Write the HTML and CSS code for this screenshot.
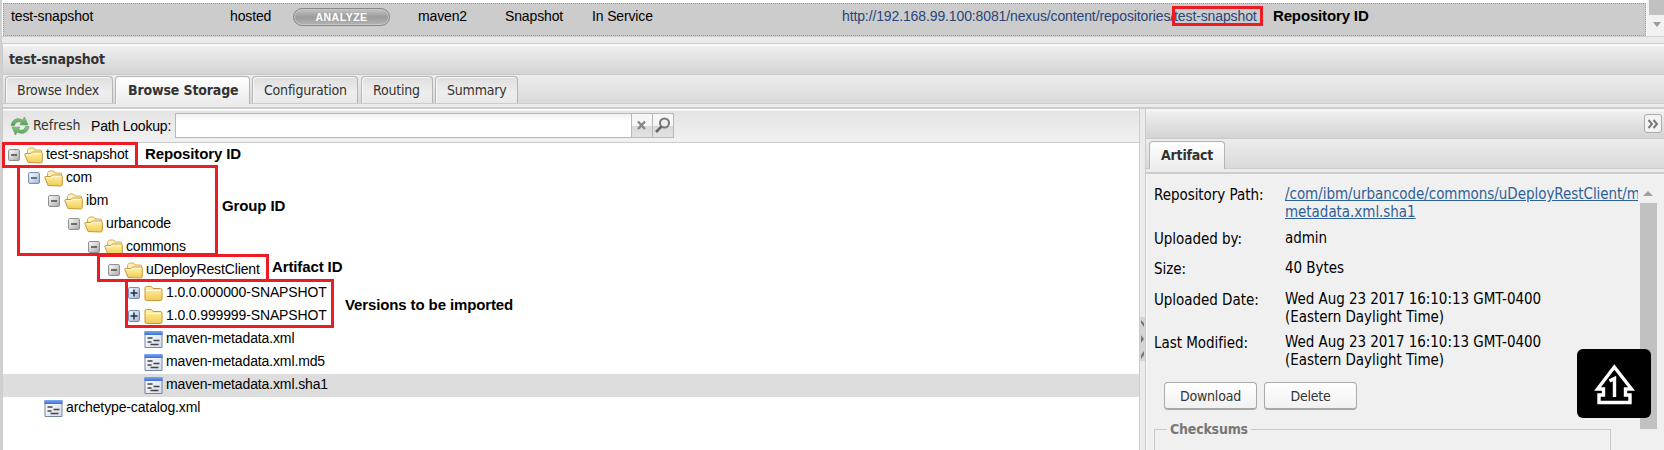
FILE: index.html
```html
<!DOCTYPE html>
<html lang="en">
<head>
<meta charset="utf-8">
<title>Nexus - test-snapshot</title>
<link rel="stylesheet" href="styles.css">
</head>
<body>
<svg width="0" height="0" class="defs">
  <defs>
    <linearGradient id="gold" x1="0" y1="0" x2="0" y2="1"><stop offset="0" stop-color="#fff3a8"/><stop offset="1" stop-color="#f0cb55"/></linearGradient>
    <linearGradient id="blue" x1="0" y1="0" x2="0" y2="1"><stop offset="0" stop-color="#7fa6f0"/><stop offset="1" stop-color="#3b6fd8"/></linearGradient>
    <linearGradient id="page" x1="0" y1="0" x2="1" y2="1"><stop offset="0" stop-color="#fff"/><stop offset="1" stop-color="#d3dcea"/></linearGradient>
    <linearGradient id="box" x1="0" y1="0" x2="1" y2="1"><stop offset="0" stop-color="#fff"/><stop offset="1" stop-color="#aaa"/></linearGradient>
    <linearGradient id="boxb" x1="0" y1="0" x2="1" y2="1"><stop offset="0" stop-color="#fff"/><stop offset="1" stop-color="#a3b8d6"/></linearGradient>
    <linearGradient id="green" x1="0" y1="0" x2="0" y2="1"><stop offset="0" stop-color="#8ec58a"/><stop offset="1" stop-color="#4f9f50"/></linearGradient>
    <symbol id="open" viewBox="0 0 19 17"><path d="M3.500 14V3.500q0-1 1-1.500l1-1h4l1.500 2h5.500q1 0 1 1v3" fill="#fdf0bd" stroke="#d9a94a"/><path d="M4 15.500 .8 7.500q-.2-1 1-1h5l1.500-1.500h8.500q1.500 0 1.500 1.200v8q-.1 1.800-1.500 1.800z" fill="url(#gold)" stroke="#c9983a"/><path d="M2.500 7.800h5l1.500-1.500h8" fill="none" stroke="#fffbe0"/></symbol>
    <symbol id="closed" viewBox="0 0 19 17"><path d="M1 14V3q0-1.500 1.500-1.500h5l1.500 2h7.500q1.500 0 1.500 1.500v9q0 1.500-1.500 1.500h-14q-1.500 0-1.500-1.500z" fill="url(#gold)" stroke="#c9983a"/><path d="M2 5.500h15" stroke="#fffbe0"/></symbol>
    <symbol id="file" viewBox="0 0 18 17"><path d="M.5.500h17v16H.5z" fill="url(#page)" stroke="#7485a5"/><path d="M0 0h18v4H0z" fill="url(#blue)"/><path d="M3 7h5M9 9.500h6M3 11h4M6 13.500h8" stroke="#444" stroke-width="1.300"/></symbol>
    <symbol id="minus" viewBox="0 0 12 12"><rect x=".6" y=".6" width="10.800" height="10.800" rx="1" fill="url(#box)" stroke="#888"/><path d="M3 6h6" stroke="#333" stroke-width="1.300"/></symbol>
    <symbol id="minusb" viewBox="0 0 12 12"><rect x=".6" y=".6" width="10.800" height="10.800" rx="1" fill="url(#boxb)" stroke="#6d84a8"/><path d="M3 6h6" stroke="#223c66" stroke-width="1.300"/></symbol>
    <symbol id="plus" viewBox="0 0 12 12"><rect x=".6" y=".6" width="10.800" height="10.800" rx="1" fill="url(#boxb)" stroke="#6d84a8"/><path d="M2.500 6h7M6 2.500v7" stroke="#222f4a" stroke-width="1.500"/></symbol>
  </defs>
</svg>
<div class="app">
  <div class="grid">
    <div class="grid-row">
      <span class="c-name">test-snapshot</span><span class="c-type">hosted</span><span class="analyze">ANALYZE</span><span class="c-format">maven2</span><span class="c-policy">Snapshot</span><span class="c-status">In Service</span><a class="c-url">http://192.168.99.100:8081/nexus/content/repositories/test-snapshot</a>
    </div>
    <div class="grid-scroll"><i></i><b></b></div>
  </div>
  <div class="detail">
    <div class="title t">test-snapshot</div>
    <div class="tabs t">
      <div class="tab w1">Browse Index</div><div class="tab on w2">Browse Storage</div><div class="tab w3">Configuration</div><div class="tab w4">Routing</div><div class="tab w5">Summary</div>
    </div>
    <div class="strip"></div>
    <div class="main">
      <div class="left">
        <div class="toolbar">
          <svg class="refresh" width="20" height="20" viewBox="0 0 20 20"><path d="M1 9.500C2 4 6 1.500 11 3.200l1.800.8L14.500 1 18 9l-8-.2 1.500-2.300C8 5 5.500 6 4.500 9.500z" fill="url(#green)" stroke="#5c9c5a" stroke-width=".6"/><path d="M19 10.500c-1 5.500-5 8-10 6.300L7.200 16 5.500 19 2 11l8 .2-1.500 2.300c3.500 1.500 6 .5 7-3z" fill="url(#green)" stroke="#5c9c5a" stroke-width=".6"/></svg>
          <span class="t refresh-label">Refresh</span><span class="lookup">Path Lookup:</span>
          <div class="field"></div>
          <div class="trig"><svg width="20" height="23" viewBox="0 0 20 23"><path d="m6 7.500 7 7.500m0-7.500L6 15" stroke="#858585" stroke-width="2.300"/></svg></div>
          <div class="trig"><svg width="20" height="23" viewBox="0 0 20 23"><circle cx="11.500" cy="9" r="4.500" fill="#eee" stroke="#777" stroke-width="2"/><path d="m8.500 12.500-5.500 5.500" stroke="#666" stroke-width="2.500"/></svg></div>
        </div>
        <div class="tree">
          <div class="row"><svg class="ex"><use href="#minus"/></svg><svg class="ic"><use href="#open"/></svg><span>test-snapshot</span></div>
          <div class="row l1"><svg class="ex"><use href="#minusb"/></svg><svg class="ic"><use href="#open"/></svg><span>com</span></div>
          <div class="row l2"><svg class="ex"><use href="#minus"/></svg><svg class="ic"><use href="#open"/></svg><span>ibm</span></div>
          <div class="row l3"><svg class="ex"><use href="#minus"/></svg><svg class="ic"><use href="#open"/></svg><span>urbancode</span></div>
          <div class="row l4"><svg class="ex"><use href="#minus"/></svg><svg class="ic"><use href="#open"/></svg><span>commons</span></div>
          <div class="row l5"><svg class="ex"><use href="#minus"/></svg><svg class="ic"><use href="#open"/></svg><span>uDeployRestClient</span></div>
          <div class="row l6"><svg class="ex"><use href="#plus"/></svg><svg class="ic"><use href="#closed"/></svg><span>1.0.0.000000-SNAPSHOT</span></div>
          <div class="row l6"><svg class="ex"><use href="#plus"/></svg><svg class="ic"><use href="#closed"/></svg><span>1.0.0.999999-SNAPSHOT</span></div>
          <div class="row l6"><i class="ex"></i><svg class="ic"><use href="#file"/></svg><span>maven-metadata.xml</span></div>
          <div class="row l6"><i class="ex"></i><svg class="ic"><use href="#file"/></svg><span>maven-metadata.xml.md5</span></div>
          <div class="row l6 sel"><i class="ex"></i><svg class="ic"><use href="#file"/></svg><span>maven-metadata.xml.sha1</span></div>
          <div class="row l1"><i class="ex"></i><svg class="ic"><use href="#file"/></svg><span>archetype-catalog.xml</span></div>
        </div>
      </div>
      <div class="split"><svg width="5" height="44" viewBox="0 0 5 44"><path d="M0 0h5v44H0z" fill="#d4d4d4"/><path d="m1 3 3 3v4L1 6zM1 18l3 4-3 4zM1 42l3-4v-4l-3 4z" fill="#777"/></svg></div>
      <div class="right t">
        <div class="rhead"><div class="collapse"><svg width="16" height="16" viewBox="0 0 16 16"><path d="m3.500 4 3.500 4-3.500 4m5-8 3.500 4-3.500 4" fill="none" stroke="#777" stroke-width="1.900"/></svg></div></div>
        <div class="rtabs"><div class="tab on">Artifact</div></div>
        <div class="rstrip"></div>
        <div class="rbody">
          <div class="info">
            <div class="f f1"><label>Repository Path:</label><a>/com/ibm/urbancode/commons/uDeployRestClient/maven-<br>metadata.xml.sha1</a></div>
            <div class="f f2"><label>Uploaded by:</label><p>admin</p></div>
            <div class="f f3"><label>Size:</label><p>40 Bytes</p></div>
            <div class="f f4"><label>Uploaded Date:</label><p>Wed Aug 23 2017 16:10:13 GMT-0400<br>(Eastern Daylight Time)</p></div>
            <div class="f f5"><label>Last Modified:</label><p>Wed Aug 23 2017 16:10:13 GMT-0400<br>(Eastern Daylight Time)</p></div>
            <div class="btns"><div class="btn">Download</div><div class="btn">Delete</div></div>
            <fieldset><legend>Checksums</legend></fieldset>
          </div>
          <div class="scroll"><b></b><i></i></div>
        </div>
      </div>
    </div>
  </div>
  <div class="mark m0"></div><div class="mark m1"></div><div class="mark m2"></div><div class="mark m3"></div><div class="mark m4"></div>
  <div class="note n0">Repository ID</div><div class="note n1">Repository ID</div><div class="note n2">Group ID</div><div class="note n3">Artifact ID</div><div class="note n4">Versions to be imported</div>
  <div class="float"><svg width="74" height="69" viewBox="0 0 74 69"><path d="M37.300 18 20.500 40h6v6h-4.500v7.500h31V46h-4.500v-6h6z" fill="none" stroke="#fff" stroke-width="3.400"/><path d="m32.500 32 5-2.500V48" fill="none" stroke="#fff" stroke-width="3.400"/></svg></div>
</div>
</body>
</html>
```
FILE: styles.css
```css
* { box-sizing: border-box; }
body { margin: 0; background: #fff; }
.defs { position: absolute; }
.app { position: relative; width: 1664px; height: 450px; overflow: hidden; background: #ebebeb; border-left: 2px solid #d0d0d0; font: 14px "Liberation Sans", Arial, sans-serif; color: #000; display: flex; flex-direction: column; }
.t { font-family: "DejaVu Sans Condensed", "DejaVu Sans", sans-serif; font-stretch: condensed; font-size: 14px; }
span, a, p, label { white-space: nowrap; }

.grid { height: 37px; display: flex; background: #fff; padding-left: 1px; border-bottom: 1px solid #d0d0d0; }
.grid-row { width: 1643px; background: #ccc; border: 1px dotted #999; height: 33px; margin-top: 3px; line-height: 16px; padding: 4px 0 0 7px; display: grid; grid-template-columns: 219px 68px 120px 87px 87px 250px 1fr; font-size: 14px; letter-spacing: -.14px; }
.c-url { color: #2a4478; letter-spacing: -.12px; }
.analyze { width: 97px; height: 18px; margin-left: -5px; border: 1px solid #888; border-radius: 9px; background: linear-gradient(#c4c4c4, #9c9c9c 50%, #b4b4b4); box-shadow: inset 0 0 0 1px #c6c6c6; color: #fff; font: bold 10.500px/17px "Liberation Sans", sans-serif; letter-spacing: .5px; text-align: center; }
.grid-scroll { flex: 1; background: #f1f1f1; display: flex; flex-direction: column; align-items: center; border-left: 1px solid #fff; padding-left: 2px; }
.grid-scroll i { width: 15px; height: 15px; background: #c1c1c1; }
.grid-scroll b { border: 4.500px solid transparent; border-top: 5px solid #9a9a9a; margin-top: 7px; }

.detail { flex: 1; display: flex; flex-direction: column; margin-top: 6px; border-left: 1px solid #ccc; }
.title { height: 32px; border-top: 1px solid #ccc; border-bottom: 1px solid #c8c8c8; background: linear-gradient(#fafafa 2px, #eee 3px, #d4d4d4); padding: 6px 0 0 6px; font-weight: bold; line-height: 18px; color: #333; letter-spacing: -.2px; }
.tabs { height: 29px; display: flex; padding: 1px 0 0 2px; background: linear-gradient(#ececec, #dadada); border-bottom: 1px solid #ccc; color: #333; letter-spacing: -.2px; }
.tab { height: 27px; margin-right: 3px; border: 1px solid #b5b5b5; border-bottom: 0; border-radius: 4px 4px 0 0; background: linear-gradient(#dedede, #eee 60%, #e8e8e8); box-shadow: inset 1px 1px #f8f8f8; line-height: 27px; padding-left: 11px; white-space: nowrap; }
.tab.on { height: 28px; background: linear-gradient(#fff, #ebebeb); font-weight: bold; letter-spacing: -.15px; padding-left: 12px; }
.w1 { width: 108px; margin-right: 2px; } .w2 { width: 135px; margin-right: 2px; } .w3 { width: 106px; } .w4 { width: 72px; margin-right: 2px; } .w5 { width: 83px; }
.strip { height: 5px; border-bottom: 2px solid #ccc; }
.main { flex: 1; display: flex; min-height: 0; }
.left { width: 1136px; background: #fff; display: flex; flex-direction: column; }
.toolbar { height: 34px; background: linear-gradient(#fff 1px, #e4e4e4 2px, #f1f1f1); border-bottom: 1px solid #ccc; display: flex; align-items: flex-start; padding: 4px 0 0 7px; }
.refresh { margin-top: 3px; margin-right: 3px; flex: none; }
.refresh-label { width: 58px; line-height: 24px; color: #333; }
.lookup { width: 84px; line-height: 26px; font-size: 14px; letter-spacing: -.2px; }
.field { width: 457px; height: 25px; border: 1px solid #b8b8b8; background: linear-gradient(#eef2f2, #fff 6px); }
.trig { width: 21px; height: 25px; border: 1px solid #b8b8b8; border-left: 0; background: linear-gradient(#f6f6f6 50%, #d9d9d9 52%, #e2e2e2); }
.tree { padding-top: 1px; }
.row { height: 23px; display: flex; padding-left: 5px; line-height: 21px; font-size: 14px; letter-spacing: -.13px; }
.row.sel { background: #ddd; }
.ex { width: 12px; height: 12px; margin: 5px 4px 0 0; flex: none; }
.ic { width: 19px; height: 17px; margin: 3px 3px 0 0; flex: none; }
.l1 { padding-left: 25px; } .l2 { padding-left: 45px; } .l3 { padding-left: 65px; } .l4 { padding-left: 85px; } .l5 { padding-left: 105px; } .l6 { padding-left: 125px; }
.split { width: 7px; border: 1px solid #ccc; border-width: 0 1px; display: flex; align-items: flex-start; padding-top: 208px; }
.right { flex: 1; min-width: 0; display: flex; flex-direction: column; }
.rhead { height: 30px; background: linear-gradient(#f5f5f5 2px, #eee 3px, #d4d4d4); border-bottom: 1px solid #c8c8c8; display: flex; justify-content: flex-end; padding: 5px 2px 0 0; }
.collapse { width: 18px; height: 19px; border: 1px solid #aaa; border-radius: 3px; background: #f3f3f3; display: flex; padding-top: 1px; }
.rtabs { height: 30px; padding: 2px 0 0 3px; display: flex; background: linear-gradient(#ececec, #dadada); border-bottom: 1px solid #ccc; }
.rtabs .tab { width: 76px; color: #333; letter-spacing: -.2px; padding-left: 11px; }
.rstrip { height: 5px; border-bottom: 2px solid #ccc; }
.rbody { flex: 1; background: #f0f0f0; display: flex; min-height: 0; border-left: 1px solid #fafafa; }
.info { flex: 1; padding: 11px 0 0 7px; }
.f { display: grid; grid-template-columns: 131px 1fr; line-height: 18px; font-size: 15px; letter-spacing: -.04px; }
.f label { padding-top: 1px; }
.f p { margin: 0; }
.f a { width: 353px; overflow: hidden; color: #2f6199; text-decoration: underline; }
.f1 { height: 44px; } .f2 { height: 30px; } .f3 { height: 31px; } .f4 { height: 43px; } .f5 { height: 46px; }
.btns { display: flex; gap: 7px; padding-left: 10px; }
.btn { width: 93px; height: 28px; border: 1px solid #aaa; border-bottom: 2px solid #a8a8a8; border-radius: 4px; background: linear-gradient(#fff, #f1f1f1); text-align: center; line-height: 26px; color: #333; margin-top: 3px; letter-spacing: -.2px; }
fieldset { margin: 10px 0 0; width: 457px; height: 70px; border: 1px solid #c8c8c8; padding: 0; }
legend { margin-left: 12px; padding: 0 3px; line-height: 18px; font-weight: bold; color: #777; letter-spacing: -.2px; }
.scroll { width: 24px; }
.scroll b { display: block; width: 0; border: 5px solid transparent; border-bottom-color: #a0a0a0; margin: 12px 0 0 3px; }
.scroll i { display: block; width: 17px; height: 226px; background: #c1c1c1; margin-top: 7px; }

/* annotations drawn over the interface */
.mark { position: absolute; border: 3px solid #ed1c24; }
.m0 { left: 1170px; top: 6px; width: 91px; height: 20px; }
.m1 { left: 0; top: 142px; width: 136px; height: 26px; }
.m2 { left: 15px; top: 165px; width: 201px; height: 91px; }
.m3 { left: 95px; top: 254px; width: 172px; height: 28px; }
.m4 { left: 123px; top: 279px; width: 209px; height: 49px; }
.note { position: absolute; font-weight: bold; font-size: 15px; line-height: 18px; white-space: nowrap; letter-spacing: -.12px; }
.n0 { left: 1271px; top: 7px; letter-spacing: -.15px; } .n1 { left: 143px; top: 145px; } .n2 { left: 220px; top: 197px; } .n3 { left: 270px; top: 258px; } .n4 { left: 343px; top: 296px; }
.float { position: absolute; left: 1575px; top: 349px; width: 74px; height: 69px; background: #000; border-radius: 6px; }
```
